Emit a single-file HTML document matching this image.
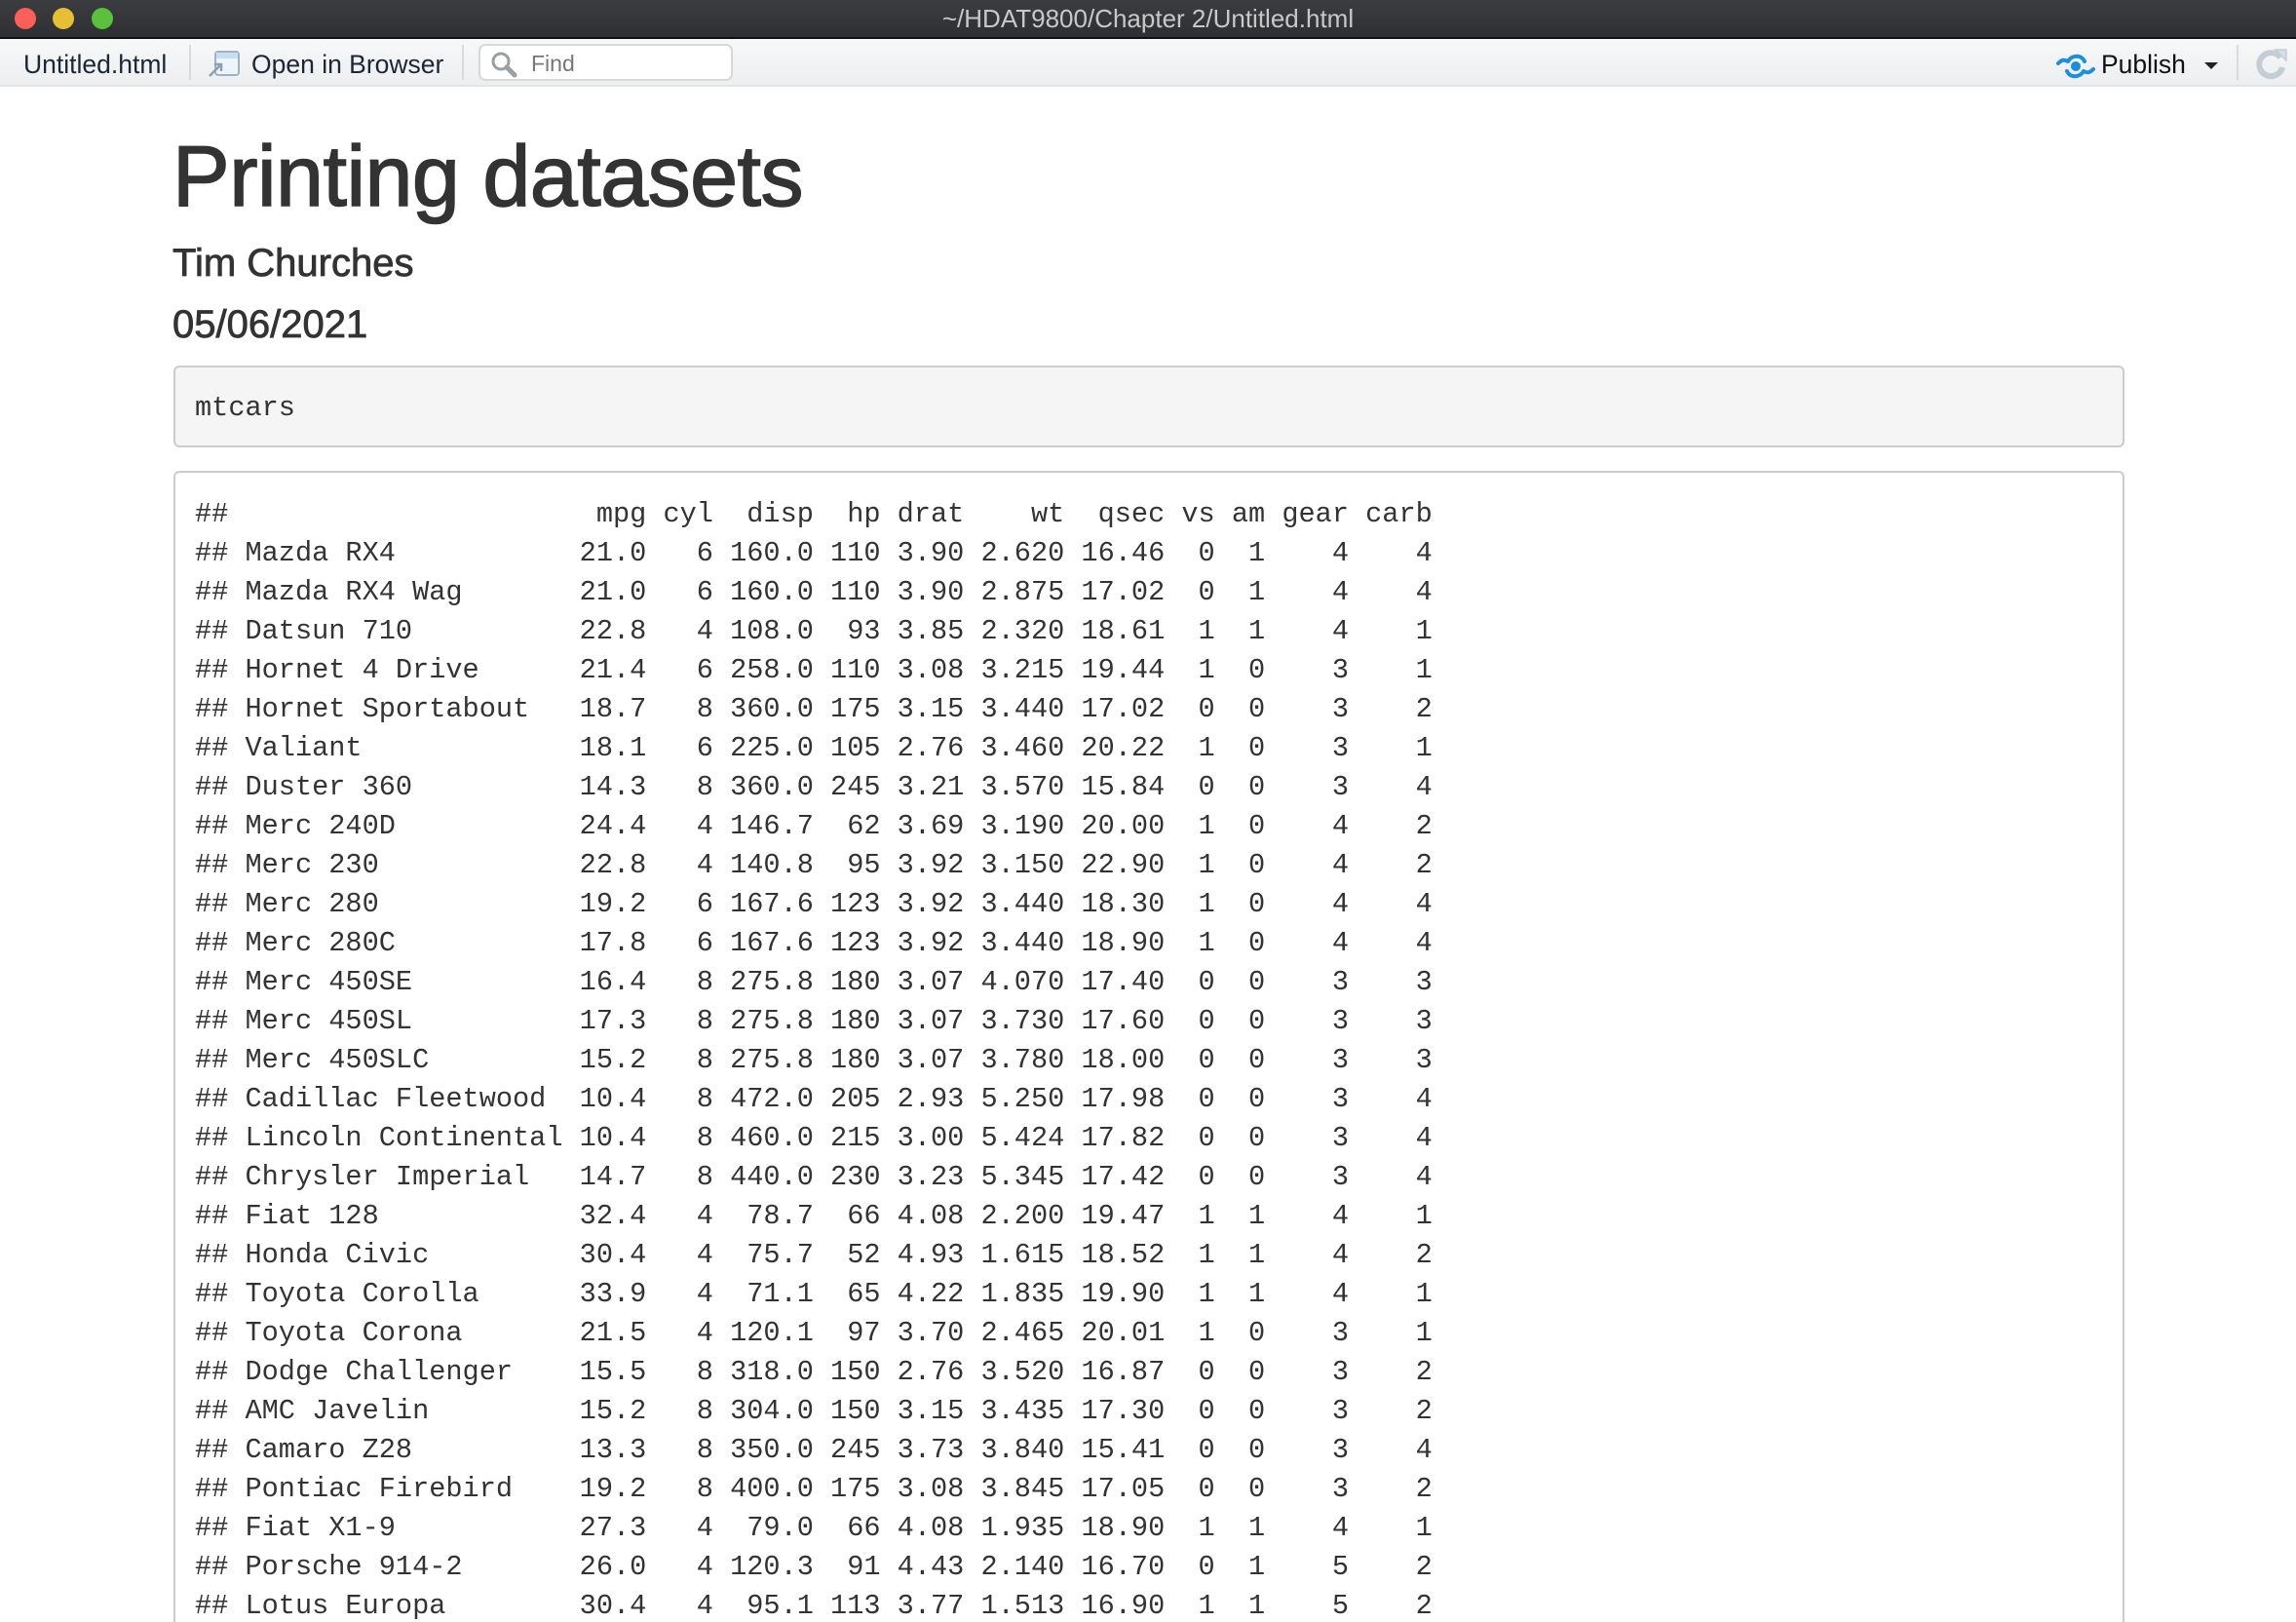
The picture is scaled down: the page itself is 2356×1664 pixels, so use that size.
<!DOCTYPE html>
<html><head><meta charset="utf-8"><style>
*{margin:0;padding:0;box-sizing:border-box}
html,body{width:2356px;height:1664px;overflow:hidden;background:#fff}
body{position:relative;font-family:"Liberation Sans",sans-serif}
#tb{position:absolute;left:0;top:0;width:2356px;height:40px;background:linear-gradient(#3c3d40,#2e2f32);border-bottom:2px solid #111}
.dot{position:absolute;top:8px;width:22px;height:22px;border-radius:50%}
#ttl{position:absolute;left:0;right:0;top:4px;text-align:center;color:#c8c8c8;font-size:26px}
#bar{position:absolute;left:0;top:40px;width:2356px;height:49px;background:linear-gradient(#f7f8f9,#eceef0);border-bottom:2px solid #e2e4e6}
.t{position:absolute;top:11px;font-size:26.5px;color:#1b2636;white-space:nowrap}
.sep{position:absolute;top:6px;width:2px;height:36px;background:#d8dadc}
#find{position:absolute;left:491px;top:5px;width:261px;height:38px;border:2px solid #d6d8da;border-radius:7px;background:#fff}
.h{position:absolute;left:177px;color:#333;white-space:nowrap;-webkit-text-stroke:0.8px #333}
pre{font-family:"Liberation Mono",monospace;font-size:28.6px;color:#333}
.box{position:absolute;left:178px;width:2002px;border:2px solid #ccc;border-radius:6px}
</style></head><body>
<div id="tb">
<div class="dot" style="left:15px;background:#fc5f57"></div>
<div class="dot" style="left:54px;background:#e7bf35"></div>
<div class="dot" style="left:94px;background:#5ac13d"></div>
<div id="ttl">~/HDAT9800/Chapter 2/Untitled.html</div>
</div>
<div id="bar">
<div class="t" style="left:24px">Untitled.html</div>
<div class="sep" style="left:194px"></div>
<svg style="position:absolute;left:212px;top:10px" width="36" height="32" viewBox="0 0 36 32"><rect x="9" y="3" width="24" height="24" rx="3" fill="#eef4fb" stroke="#9bb2c9" stroke-width="2"/><rect x="10" y="4" width="22" height="6" fill="#c9dcf0"/><path d="M3 28 L14 17 M8 16 h7 v7" stroke="#8aa0b5" stroke-width="2.5" fill="none"/></svg>
<div class="t" style="left:258px">Open in Browser</div>
<div class="sep" style="left:474px"></div>
<div id="find"><svg style="position:absolute;left:10px;top:5px" width="30" height="28" viewBox="0 0 30 28"><circle cx="11" cy="11" r="8" fill="none" stroke="#9a9fa4" stroke-width="3"/><path d="M17 17 L25 25" stroke="#9a9fa4" stroke-width="5" stroke-linecap="round"/></svg><span style="position:absolute;left:52px;top:5px;font-size:23px;color:#777">Find</span></div>
<svg style="position:absolute;left:2110px;top:13px" width="40" height="30" viewBox="0 0 40 30"><path d="M2 12 C6 8 8 8 12 10 M12 10 C16 3 26 3 29 10" stroke="#1a8fde" stroke-width="4" fill="none" stroke-linecap="round"/><path d="M38 18 C34 22 32 22 28 20 M28 20 C24 27 14 27 11 20" stroke="#1a8fde" stroke-width="4" fill="none" stroke-linecap="round"/><circle cx="20" cy="15" r="5" fill="#1a8fde"/></svg>
<div class="t" style="left:2156px;color:#111">Publish</div>
<svg style="position:absolute;left:2261px;top:22px" width="16" height="10"><path d="M1 2 L15 2 L8 9 Z" fill="#222"/></svg>
<div class="sep" style="left:2295px"></div>
<svg style="position:absolute;left:2313px;top:7px" width="36" height="36" viewBox="0 0 36 36"><path d="M27 12 A12 12 0 1 0 29 22" stroke="#c4ccd6" stroke-width="6" fill="none"/><path d="M22 4 L33 4 L33 15 Z" fill="#d6dde6" stroke="#c4ccd6" stroke-width="1.5"/></svg>
</div>

<div class="h" style="top:131px;font-size:88px;line-height:100px;letter-spacing:-0.5px;-webkit-text-stroke:1.5px #333">Printing datasets</div>
<div class="h" style="top:245px;font-size:40px;line-height:50px">Tim Churches</div>
<div class="h" style="top:308px;font-size:40px;line-height:50px">05/06/2021</div>

<div class="box" style="top:375px;height:84px;background:#f5f5f5"><pre style="position:absolute;left:20px;top:22px;line-height:40px">mtcars</pre></div>

<div class="box" style="top:483px;height:1200px;background:#fff"><pre style="position:absolute;left:20px;top:23px;line-height:40px">##                      mpg cyl  disp  hp drat    wt  qsec vs am gear carb
## Mazda RX4           21.0   6 160.0 110 3.90 2.620 16.46  0  1    4    4
## Mazda RX4 Wag       21.0   6 160.0 110 3.90 2.875 17.02  0  1    4    4
## Datsun 710          22.8   4 108.0  93 3.85 2.320 18.61  1  1    4    1
## Hornet 4 Drive      21.4   6 258.0 110 3.08 3.215 19.44  1  0    3    1
## Hornet Sportabout   18.7   8 360.0 175 3.15 3.440 17.02  0  0    3    2
## Valiant             18.1   6 225.0 105 2.76 3.460 20.22  1  0    3    1
## Duster 360          14.3   8 360.0 245 3.21 3.570 15.84  0  0    3    4
## Merc 240D           24.4   4 146.7  62 3.69 3.190 20.00  1  0    4    2
## Merc 230            22.8   4 140.8  95 3.92 3.150 22.90  1  0    4    2
## Merc 280            19.2   6 167.6 123 3.92 3.440 18.30  1  0    4    4
## Merc 280C           17.8   6 167.6 123 3.92 3.440 18.90  1  0    4    4
## Merc 450SE          16.4   8 275.8 180 3.07 4.070 17.40  0  0    3    3
## Merc 450SL          17.3   8 275.8 180 3.07 3.730 17.60  0  0    3    3
## Merc 450SLC         15.2   8 275.8 180 3.07 3.780 18.00  0  0    3    3
## Cadillac Fleetwood  10.4   8 472.0 205 2.93 5.250 17.98  0  0    3    4
## Lincoln Continental 10.4   8 460.0 215 3.00 5.424 17.82  0  0    3    4
## Chrysler Imperial   14.7   8 440.0 230 3.23 5.345 17.42  0  0    3    4
## Fiat 128            32.4   4  78.7  66 4.08 2.200 19.47  1  1    4    1
## Honda Civic         30.4   4  75.7  52 4.93 1.615 18.52  1  1    4    2
## Toyota Corolla      33.9   4  71.1  65 4.22 1.835 19.90  1  1    4    1
## Toyota Corona       21.5   4 120.1  97 3.70 2.465 20.01  1  0    3    1
## Dodge Challenger    15.5   8 318.0 150 2.76 3.520 16.87  0  0    3    2
## AMC Javelin         15.2   8 304.0 150 3.15 3.435 17.30  0  0    3    2
## Camaro Z28          13.3   8 350.0 245 3.73 3.840 15.41  0  0    3    4
## Pontiac Firebird    19.2   8 400.0 175 3.08 3.845 17.05  0  0    3    2
## Fiat X1-9           27.3   4  79.0  66 4.08 1.935 18.90  1  1    4    1
## Porsche 914-2       26.0   4 120.3  91 4.43 2.140 16.70  0  1    5    2
## Lotus Europa        30.4   4  95.1 113 3.77 1.513 16.90  1  1    5    2</pre></div>
</body></html>
